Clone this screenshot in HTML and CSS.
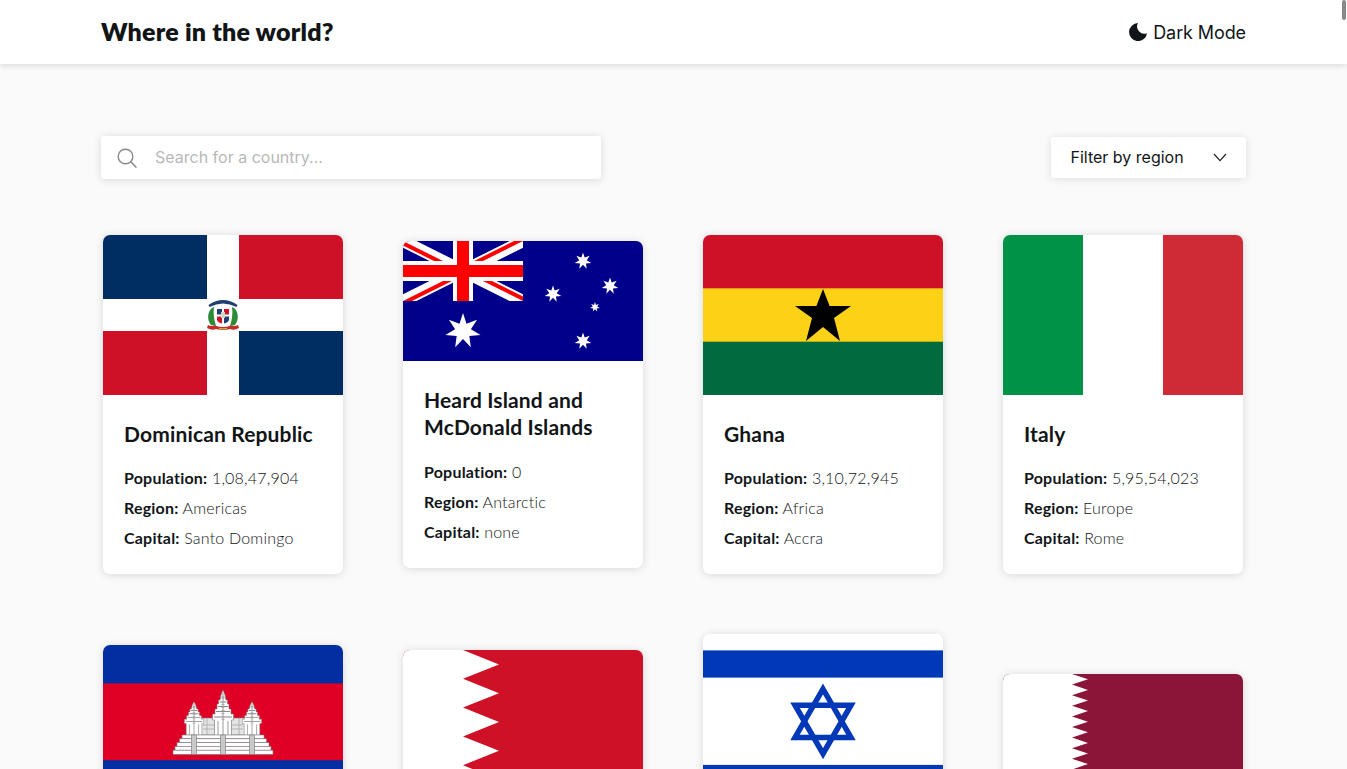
FILE: index.html
```html
<!DOCTYPE html>
<html lang="en">
<head>
    <meta charset="UTF-8">
    <meta name="viewport" content="width=device-width, initial-scale=1.0">
    <title>Where in the world?</title>
    <link rel="stylesheet" href="styles.css">
</head>
<body>
    <svg class="defs" width="0" height="0">
        <defs>
            <polygon id="star7" points="0,-1 .195,-.405 .782,-.623 .439,-.1 .975,.223 .352,.281 .434,.901 0,.45 -.434,.901 -.352,.281 -.975,.223 -.439,-.1 -.782,-.623 -.195,-.405" fill="#fff"/>
            <clipPath id="jackClip"><path d="M30,15h30v15zv15h-30zh-30v-15zv-15h30z"/></clipPath>
            <g id="tower">
                <path d="M0 0L2 5 3 10 4.500 10 4.500 14 6 14 6 19 8 19 8 24 10.500 24 10.500 30 8.500 30 8.500 46H-8.500V30L-10.500 30-10.500 24-8 24-8 19-6 19-6 14-4.500 14-4.500 10-3 10-2 5z" fill="#fff" stroke="#777" stroke-width=".6"/>
                <path d="M-1.500 7H1.500M-3.500 12H3.500M-5 16.500H5M-7 21.500H7M-9 27H9" stroke="#888" stroke-width="1.200"/>
                <path d="M-5 31V46M0 3V46M5 31V46" stroke="#999" stroke-width="1"/>
                <path d="M0 8V30" stroke="#aaa" stroke-width="3" stroke-dasharray="1 2"/>
            </g>
        </defs>
    </svg>
    <div class="scroll-thumb"></div>

    <header class="topbar">
        <h1 class="logo">Where in the world?</h1>
        <button class="theme-toggle">
            <svg class="moon" viewBox="0 0 18 18" width="18" height="18"><path d="M9 .1A9 9 0 1 0 18 10.200 7.200 7.200 0 0 1 9 .1z" fill="#111517"/></svg>
            Dark Mode
        </button>
    </header>

    <main class="content">
        <div class="toolbar">
            <div class="search">
                <svg viewBox="0 0 20 20" width="20" height="20"><circle cx="8.500" cy="8.500" r="7.300" fill="none" stroke="#888" stroke-width="1.400"/><path d="M13.800 13.800L19.400 19.600" stroke="#888" stroke-width="1.500" fill="none"/></svg>
                <input type="text" class="search-input" placeholder="Search for a country...">
            </div>
            <div class="filter">
                <span class="filter-label">Filter by region</span>
                <svg viewBox="0 0 14 9" width="14" height="9"><path d="M1 1l6 6.600L13 1" stroke="#222" stroke-width="1.200" fill="none"/></svg>
            </div>
        </div>

        <section class="countries">
            <article class="card">
                <svg class="flag" viewBox="0 0 240 160">
                    <rect width="240" height="160" fill="#fff"/>
                    <rect width="104" height="64" fill="#002d62"/>
                    <rect x="136" width="104" height="64" fill="#ce1126"/>
                    <rect y="96" width="104" height="64" fill="#ce1126"/>
                    <rect x="136" y="96" width="104" height="64" fill="#002d62"/>
                    <path d="M105.500 70Q120 60 134.500 70L133.500 72Q120 65 106.500 72z" fill="#1f3f70"/>
                    <path d="M111 72C105 74 103 84 108 90L113 91C111 85 110 78 111 72zM129 72C135 74 137 84 132 90L127 91C129 85 130 78 129 72z" fill="#2d8a36"/>
                    <path d="M113 73H127V85Q127 89 120 91 113 89 113 85z" fill="#fff"/>
                    <rect x="114" y="74" width="5" height="5.500" fill="#1f3f70"/>
                    <rect x="121" y="74" width="5" height="5.500" fill="#ce1126"/>
                    <path d="M114 81.500H119V88.500Q115 87.500 114 85z" fill="#ce1126"/>
                    <path d="M121 81.500H126V85Q125 87.500 121 88.500z" fill="#1f3f70"/>
                    <rect x="118" y="77" width="4" height="6" fill="#cfd8c8"/>
                    <path d="M105 90Q108 91.500 112 90.500Q120 93.500 128 90.500Q132 91.500 135 90L136 93Q131 96 127 94Q120 96 113 94Q109 96 104 93z" fill="#c62a2a"/>
                    <rect x="116" y="93" width="8" height="1.500" fill="#c9a83a"/>
                </svg>
                <div class="card-body">
                    <h2 class="country-name">Dominican Republic</h2>
                    <p class="stat"><b>Population:</b> 1,08,47,904</p>
                    <p class="stat"><b>Region:</b> Americas</p>
                    <p class="stat"><b>Capital:</b> Santo Domingo</p>
                </div>
            </article>

            <article class="card">
                <svg class="flag" viewBox="0 0 240 120">
                    <rect width="240" height="120" fill="#00008b"/>
                    <svg x="0" y="0" width="120" height="60" viewBox="0 0 60 30">
                        <path d="M0,0L60,30M60,0L0,30" stroke="#fff" stroke-width="6"/>
                        <path d="M0,0L60,30M60,0L0,30" stroke="#f00" stroke-width="4" clip-path="url(#jackClip)"/>
                        <path d="M30,0V30M0,15H60" stroke="#fff" stroke-width="10"/>
                        <path d="M30,0V30M0,15H60" stroke="#f00" stroke-width="6"/>
                    </svg>
                    <use href="#star7" transform="translate(60 90) scale(18)"/>
                    <use href="#star7" transform="translate(180 20) scale(8.500)"/>
                    <use href="#star7" transform="translate(207 45) scale(8.500)"/>
                    <use href="#star7" transform="translate(150 53) scale(8.500)"/>
                    <use href="#star7" transform="translate(192 66) scale(5)"/>
                    <use href="#star7" transform="translate(180 100) scale(8.500)"/>
                </svg>
                <div class="card-body">
                    <h2 class="country-name">Heard Island and McDonald Islands</h2>
                    <p class="stat"><b>Population:</b> 0</p>
                    <p class="stat"><b>Region:</b> Antarctic</p>
                    <p class="stat"><b>Capital:</b> none</p>
                </div>
            </article>

            <article class="card">
                <svg class="flag" viewBox="0 0 240 160">
                    <rect width="240" height="54" fill="#ce1126"/>
                    <rect y="53.300" width="240" height="54" fill="#fcd116"/>
                    <rect y="106.700" width="240" height="53.300" fill="#006b3f"/>
                    <polygon points="120,54 126.600,71 148,71 131,83 137,106 120,92 103,106 109,83 92,71 113.400,71" fill="#000"/>
                </svg>
                <div class="card-body">
                    <h2 class="country-name">Ghana</h2>
                    <p class="stat"><b>Population:</b> 3,10,72,945</p>
                    <p class="stat"><b>Region:</b> Africa</p>
                    <p class="stat"><b>Capital:</b> Accra</p>
                </div>
            </article>

            <article class="card">
                <svg class="flag" viewBox="0 0 240 160">
                    <rect width="240" height="160" fill="#fff"/>
                    <rect width="80" height="160" fill="#009246"/>
                    <rect x="160" width="80" height="160" fill="#ce2b37"/>
                </svg>
                <div class="card-body">
                    <h2 class="country-name">Italy</h2>
                    <p class="stat"><b>Population:</b> 5,95,54,023</p>
                    <p class="stat"><b>Region:</b> Europe</p>
                    <p class="stat"><b>Capital:</b> Rome</p>
                </div>
            </article>

            <article class="card card-low">
                <svg class="flag" viewBox="0 0 240 153.600">
                    <rect width="240" height="153.600" fill="#032ea1"/>
                    <rect y="38.400" width="240" height="76.800" fill="#e00025"/>
                    <!-- temple -->
                    <g stroke="#777" stroke-width=".6" fill="#fff">
                        <rect x="96" y="73" width="48" height="17" fill="#e4e4e4"/>
                        <path d="M100 80H140M100 84H140M104 73V90M112 73V90M128 73V90M136 73V90" stroke="#aaa" stroke-width=".8"/>
                    </g>
                    <use href="#tower" transform="translate(91 56.700) scale(.92 .73)"/>
                    <use href="#tower" transform="translate(149 56.700) scale(.92 .73)"/>
                    <use href="#tower" transform="translate(120 45)"/>
                    <g stroke="#777" stroke-width=".6" fill="#fff">
                        <rect x="79" y="90" width="82" height="3.800"/>
                        <rect x="76.500" y="93.800" width="87" height="3.800"/>
                        <rect x="74" y="97.600" width="92" height="3.800"/>
                        <rect x="72" y="101.400" width="96" height="3.800"/>
                        <rect x="70" y="105.200" width="100" height="4.200"/>
                        <rect x="88.500" y="90" width="5" height="19.400" fill="#c9c9c9"/>
                        <rect x="117.500" y="90" width="5" height="19.400" fill="#c9c9c9"/>
                        <rect x="146.500" y="90" width="5" height="19.400" fill="#c9c9c9"/>
                    </g>
                </svg>
                <div class="card-body">
                    <h2 class="country-name">Cambodia</h2>
                    <p class="stat"><b>Population:</b> 1,67,18,971</p>
                    <p class="stat"><b>Region:</b> Asia</p>
                    <p class="stat"><b>Capital:</b> Phnom Penh</p>
                </div>
            </article>

            <article class="card card-low">
                <svg class="flag" viewBox="0 0 240 144">
                    <rect width="240" height="144" fill="#ce1126"/>
                    <polygon points="0,0 60,0 96,14.400 60,28.800 96,43.200 60,57.600 96,72 60,86.400 96,100.800 60,115.200 96,129.600 60,144 0,144" fill="#fff"/>
                </svg>
                <div class="card-body">
                    <h2 class="country-name">Bahrain</h2>
                    <p class="stat"><b>Population:</b> 17,01,583</p>
                    <p class="stat"><b>Region:</b> Asia</p>
                    <p class="stat"><b>Capital:</b> Manama</p>
                </div>
            </article>

            <article class="card card-low">
                <svg class="flag" viewBox="0 0 240 175">
                    <rect width="240" height="175" fill="#fff"/>
                    <rect y="16.400" width="240" height="27.200" fill="#0038b8"/>
                    <rect y="130.900" width="240" height="27.200" fill="#0038b8"/>
                    <g fill="none" stroke="#0038b8" stroke-width="5.500">
                        <polygon points="120,55 148,103.500 92,103.500"/>
                        <polygon points="120,119.700 92,71.200 148,71.200"/>
                    </g>
                </svg>
                <div class="card-body">
                    <h2 class="country-name">Israel</h2>
                    <p class="stat"><b>Population:</b> 92,16,900</p>
                    <p class="stat"><b>Region:</b> Asia</p>
                    <p class="stat"><b>Capital:</b> Jerusalem</p>
                </div>
            </article>

            <article class="card card-low">
                <svg class="flag" viewBox="0 0 240 95.500">
                    <rect width="240" height="95.500" fill="#8a1538"/>
                    <polygon points="0,0 69,0 85,5.300 69,10.600 85,15.900 69,21.200 85,26.500 69,31.800 85,37.100 69,42.400 85,47.700 69,53 85,58.300 69,63.600 85,68.900 69,74.200 85,79.500 69,84.800 85,90.100 69,95.500 0,95.500" fill="#fff"/>
                </svg>
                <div class="card-body">
                    <h2 class="country-name">Qatar</h2>
                    <p class="stat"><b>Population:</b> 28,81,060</p>
                    <p class="stat"><b>Region:</b> Asia</p>
                    <p class="stat"><b>Capital:</b> Doha</p>
                </div>
            </article>
        </section>
    </main>
</body>
</html>
```
FILE: styles.css
```css
html {
    scrollbar-width: none;
}
html::-webkit-scrollbar {
    display: none;
}
body {
    font-family: "Lato", "Open Sans", sans-serif;
    margin: 0;
    padding: 0;
    background-color: #fafafa;
    color: #111517;
}
.defs {
    position: absolute;
}
.scroll-thumb {
    position: fixed;
    top: 0;
    right: 1px;
    width: 4px;
    height: 20px;
    border-radius: 2px;
    background-color: #888;
}
.topbar {
    display: flex;
    align-items: center;
    justify-content: space-between;
    height: 64px;
    padding: 0 101px;
    background-color: white;
    box-shadow: 0 2px 6px rgba(0, 0, 0, 0.12);
}
.logo {
    margin: 0 0 2px;
    font-size: 25px;
    font-weight: 800;
    letter-spacing: 0.2px;
}
.theme-toggle {
    display: flex;
    align-items: center;
    gap: 6px;
    padding: 0;
    border: none;
    background: none;
    color: #111517;
    font-family: "Inter", sans-serif;
    font-size: 18px;
    letter-spacing: -0.1px;
    cursor: pointer;
}
.content {
    padding: 72px 101px 0;
}
.toolbar {
    display: flex;
    align-items: center;
    justify-content: space-between;
    margin-bottom: 56px;
}
.search {
    display: flex;
    align-items: center;
    gap: 18px;
    width: 500px;
    height: 43px;
    padding-left: 16px;
    box-sizing: border-box;
    background-color: white;
    border-radius: 3px;
    box-shadow: 0 1px 8px rgba(0, 0, 0, 0.14);
}
.search-input {
    flex: 1;
    min-width: 0;
    padding: 0 0 2px;
    border: none;
    outline: none;
    background: none;
    font-family: "Inter", sans-serif;
    font-size: 16px;
}
.search-input::placeholder {
    color: #b8b8b8;
}
.filter {
    display: flex;
    align-items: center;
    justify-content: space-between;
    width: 195px;
    height: 41px;
    padding: 0 19px 0 19.5px;
    box-sizing: border-box;
    background-color: white;
    border-radius: 3px;
    box-shadow: 0 1px 8px rgba(0, 0, 0, 0.12);
    font-family: "Inter", sans-serif;
    font-size: 16px;
}
.filter-label {
    padding-bottom: 2px;
}
.countries {
    display: grid;
    grid-template-columns: repeat(4, 240px);
    gap: 60px;
    align-items: center;
    margin: 0 2px;
    padding-bottom: 60px;
}
.card {
    overflow: hidden;
    background-color: white;
    border-radius: 7px;
    box-shadow: 0 1px 8px rgba(0, 0, 0, 0.14);
}
.flag {
    display: block;
    width: 240px;
    height: auto;
}
.card-body {
    padding: 24.5px 21px 21px;
}
.card-low .card-body {
    padding-bottom: 27.5px;
}
.country-name {
    margin: 0 0 16px;
    font-size: 21px;
    font-weight: 700;
    line-height: 27.5px;
    letter-spacing: 0.15px;
}
.stat {
    margin: 0;
    font-size: 16px;
    font-weight: 300;
    line-height: 30px;
    letter-spacing: 0.2px;
}
.stat b {
    font-weight: 700;
}
```
